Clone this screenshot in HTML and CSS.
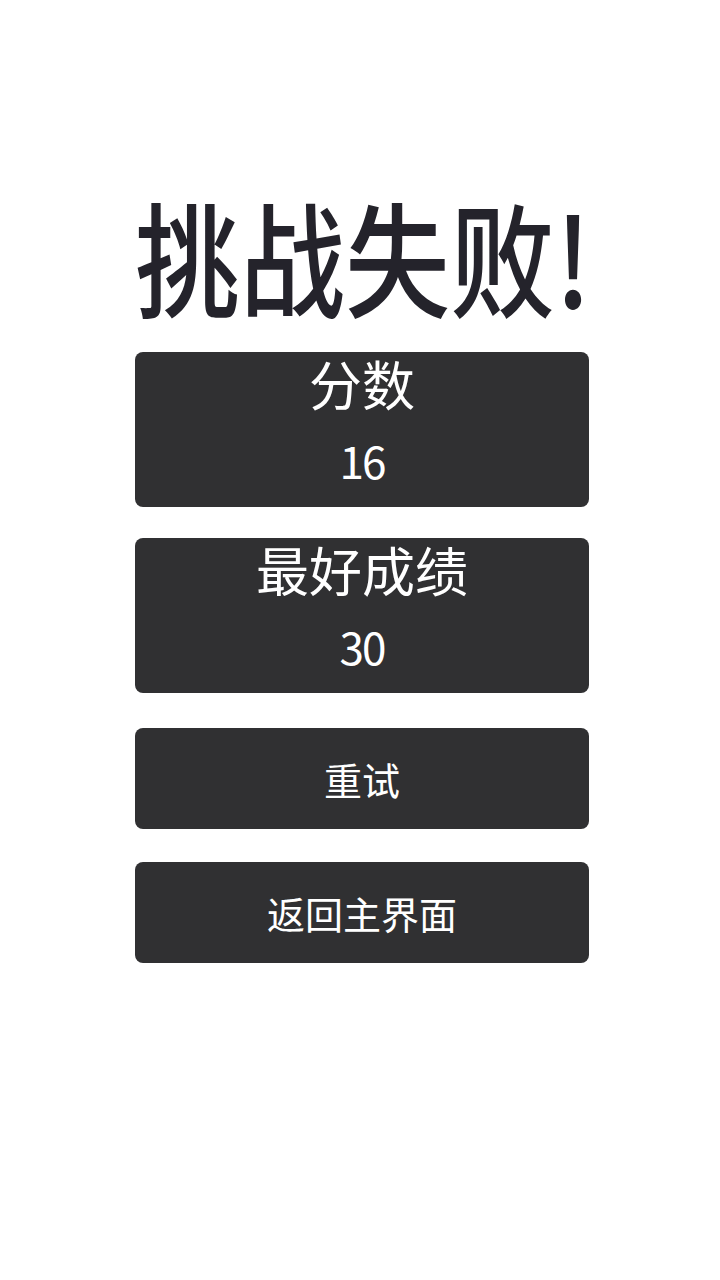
FILE: index.html
```html
<!DOCTYPE html>
<html lang="zh-CN">
<head>
  <meta charset="UTF-8" />
  <meta name="viewport" content="width=device-width, initial-scale=1.0"/>
  <title>挑战失败</title>
  <link rel="stylesheet" href="styles.css">
</head>
<body>
  <main class="resultado">
    <h1 class="titulo">挑战失败!</h1>

    <div class="cartao">
      <p class="rotulo">分数</p>
      <p class="valor">16</p>
    </div>

    <div class="cartao">
      <p class="rotulo">最好成绩</p>
      <p class="valor">30</p>
    </div>

    <button class="botao">重试</button>
    <button class="botao">返回主界面</button>
  </main>
</body>
</html>
```

FILE: styles.css
```css
:root {
  --escuro: #303032;
  --titulo: #24232b;
  --branco: #ffffff;
}
body {
  margin: 0;
  background: var(--branco);
  font-family: "Noto Sans CJK SC", "Noto Sans", sans-serif;
  padding: 189px 0 0 4px;
}
.resultado {
  width: 454px;
  margin: 0 auto;
  display: flex;
  flex-direction: column;
  align-items: stretch;
}
.titulo {
  margin: 0 0 33px;
  font-size: 105px;
  font-weight: 500;
  line-height: 130px;
  color: var(--titulo);
  text-align: center;
  white-space: nowrap;
  transform: scaleY(1.18);
}
.cartao {
  background: var(--escuro);
  color: var(--branco);
  border-radius: 8px;
  height: 155px;
  margin-bottom: 31px;
  display: flex;
  flex-direction: column;
  text-align: center;
}
.cartao + .cartao {
  margin-bottom: 35px;
}
.rotulo {
  margin: 0;
  font-size: 53px;
  line-height: 62px;
}
.valor {
  margin: 0;
  font-size: 44px;
  line-height: 92px;
  letter-spacing: -2px;
}
.botao {
  background: var(--escuro);
  color: var(--branco);
  border: none;
  border-radius: 8px;
  height: 101px;
  margin-bottom: 33px;
  font-family: inherit;
  font-size: 38px;
  cursor: pointer;
}
```
